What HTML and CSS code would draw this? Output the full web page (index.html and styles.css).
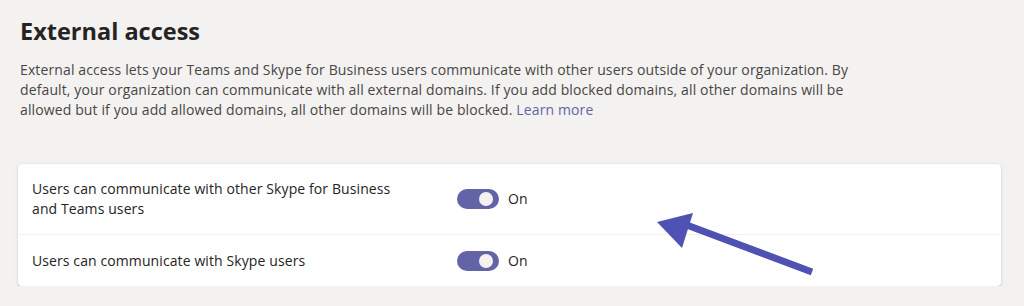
FILE: index.html
```html
<!DOCTYPE html>
<html lang="en">
<head>
  <meta charset="UTF-8" />
  <title>External access</title>
  <link rel="stylesheet" href="styles.css">
</head>
<body>
  <div class="page">
    <h2>External access</h2>
    <p class="intro">External access lets your Teams and Skype for Business users communicate with other users outside of your organization. By default, your organization can communicate with all external domains. If you add blocked domains, all other domains will be allowed but if you add allowed domains, all other domains will be blocked. <a href="#">Learn more</a></p>

    <!-- Settings -->
    <div class="card">
      <div class="row">
        <div class="label">Users can communicate with other Skype for Business and Teams users</div>
        <div class="toggle on"><span class="knob"></span></div>
        <span class="state">On</span>
      </div>
      <div class="row">
        <div class="label">Users can communicate with Skype users</div>
        <div class="toggle on"><span class="knob"></span></div>
        <span class="state">On</span>
      </div>
    </div>

    <!-- Callout arrow -->
    <svg class="arrow" width="180" height="80" viewBox="0 0 180 80">
      <line x1="162" y1="62" x2="34" y2="14" stroke="#4f52b2" stroke-width="7" />
      <polygon points="7,12 43,3 32,38" fill="#4f52b2" />
    </svg>
  </div>
</body>
</html>
```

FILE: styles.css
```css
body {
  margin: 0;
  background: #f3f2f1;
  font-family: 'Open Sans', 'Noto Sans', sans-serif;
  color: #252423;
}

.page {
  position: relative;
  padding: 13px 23px 0 18px;
}

h2 {
  margin: 0 0 0 2px;
  font-size: 23.5px;
  line-height: 36px;
  font-weight: 700;
  color: #252423;
}

.intro {
  margin: 11px 0 0 2px;
  max-width: 862px;
  font-size: 14px;
  line-height: 20px;
  letter-spacing: 0.12px;
  color: #484644;
}

.intro a {
  color: #6264a7;
  text-decoration: none;
}

.card {
  margin-top: 44px;
  background: white;
  border-radius: 4px;
  box-shadow: 0 1.6px 3.6px rgba(0,0,0,0.13), 0 0.3px 0.9px rgba(0,0,0,0.11);
}

.row {
  display: flex;
  align-items: center;
  padding: 15px 14px;
  font-size: 14px;
  line-height: 20px;
  letter-spacing: 0.1px;
}

.row + .row {
  padding-top: 16px;
  border-top: 1px solid #f3f2f1;
}

.label {
  flex: 0 0 372px;
  margin-right: 53px;
}

.toggle {
  width: 42px;
  height: 20px;
  border-radius: 10px;
  background: #c8c6c4;
  position: relative;
}

.toggle.on {
  background: #6264a7;
}

.knob {
  position: absolute;
  top: 3px;
  right: 6px;
  width: 14px;
  height: 14px;
  border-radius: 50%;
  background: #f3f2f1;
}

.state {
  margin-left: 9px;
}

.arrow {
  position: absolute;
  left: 650px;
  top: 210px;
}
```
